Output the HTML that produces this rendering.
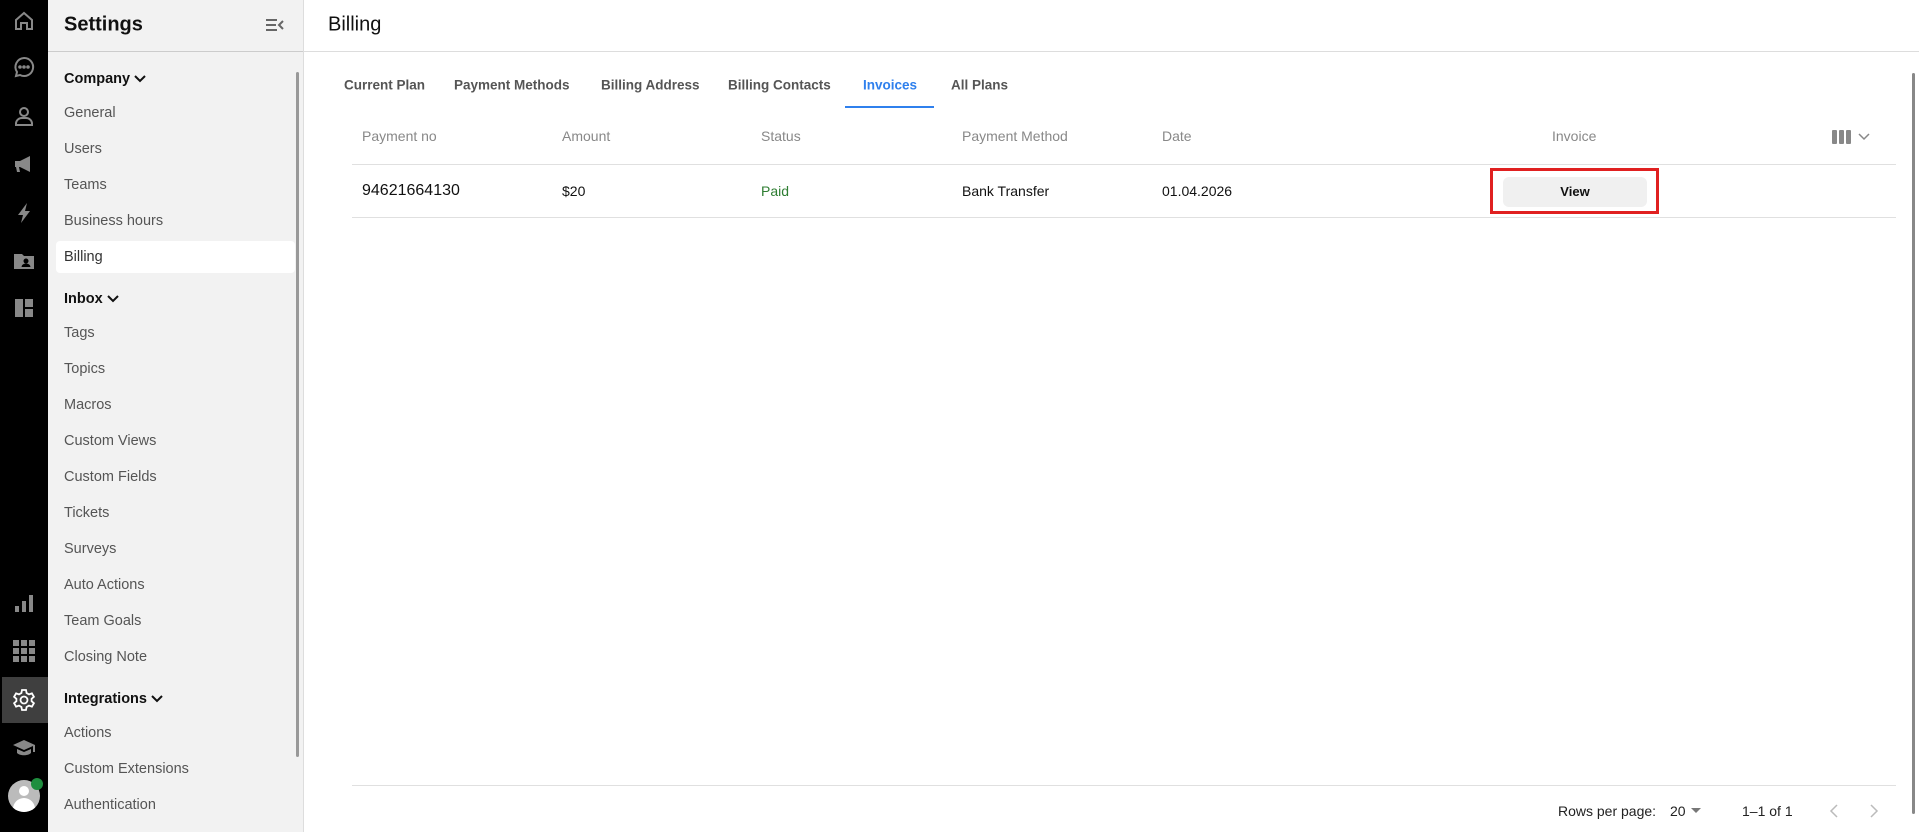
<!DOCTYPE html>
<html><head><meta charset="utf-8"><style>
*{box-sizing:border-box;margin:0;padding:0}
body{width:1919px;height:832px;overflow:hidden;font-family:"Liberation Sans",sans-serif;background:#fff;position:relative}
.abs{position:absolute}
#rail{left:0;top:0;width:48px;height:832px;background:#000}
#rail svg{position:absolute;left:12px;width:24px;height:24px}
#side{left:48px;top:0;width:256px;height:832px;background:#f2f2f2;border-right:1px solid #ddd}
.mi{position:absolute;left:16px;font-size:14.5px;color:#555;transform:translateY(-50%)}
.mh{position:absolute;left:16px;font-size:14.5px;color:#111;font-weight:bold;transform:translateY(-50%)}
.mh svg{display:inline-block;vertical-align:middle;margin-left:4px}
.tab{position:absolute;top:85px;transform:translateY(-50%);font-size:13.5px;font-weight:bold;color:#555}
.th{position:absolute;top:136px;transform:translateY(-50%);font-size:14px;color:#888}
.td{position:absolute;top:191px;transform:translateY(-50%);font-size:14px;color:#111}
</style></head><body>
<div id="rail" class="abs">
<svg style="top:9px" viewBox="0 0 24 24" fill="none" stroke="#888" stroke-width="2"><path d="M4 11l8-7 8 7v9h-5v-6H9v6H4z"/></svg>
<svg style="top:55px" viewBox="0 0 24 24" fill="none" stroke="#888" stroke-width="2"><path d="M12 3a9 9 0 1 1-4 17l-4 1 1-4A9 9 0 0 1 12 3z"/><circle cx="8" cy="12" r=".8" fill="#888"/><circle cx="12" cy="12" r=".8" fill="#888"/><circle cx="16" cy="12" r=".8" fill="#888"/></svg>
<svg style="top:104px" viewBox="0 0 24 24" fill="none" stroke="#888" stroke-width="2"><circle cx="12" cy="8" r="4"/><path d="M4 21v-2a6 6 0 0 1 6-5h4a6 6 0 0 1 6 5v2z"/></svg>
<svg style="top:152px" viewBox="0 0 24 24" fill="#888"><path d="M3 9h5l10-5v16L8 15H7l1 5H5l-1-5H3z"/></svg>
<svg style="top:201px" viewBox="0 0 24 24" fill="#888"><path d="M15 2L6 14h5l-2 8 9-12h-5z"/></svg>
<svg style="top:249px" viewBox="0 0 24 24" fill="#888"><path d="M2 5h8l2 2h10v13H2z"/><circle cx="14" cy="12" r="2.5" fill="#000"/><path d="M9.5 18a4.5 3.5 0 0 1 9 0z" fill="#000"/></svg>
<svg style="top:296px" viewBox="0 0 24 24" fill="#888"><path d="M3 3h8v18H3zM13 3h8v8h-8zM13 13h8v8h-8z"/></svg>
<svg style="top:591px" viewBox="0 0 24 24" fill="#888"><rect x="3" y="15" width="4" height="6"/><rect x="10" y="10" width="4" height="11"/><rect x="17" y="4" width="4" height="17"/></svg>
<svg style="top:639px" viewBox="0 0 24 24" fill="#888"><rect x="1" y="1" width="6" height="6"/><rect x="9" y="1" width="6" height="6"/><rect x="17" y="1" width="6" height="6"/><rect x="1" y="9" width="6" height="6"/><rect x="9" y="9" width="6" height="6"/><rect x="17" y="9" width="6" height="6"/><rect x="1" y="17" width="6" height="6"/><rect x="9" y="17" width="6" height="6"/><rect x="17" y="17" width="6" height="6"/></svg>
<div class="abs" style="left:2px;top:677px;width:46px;height:46px;background:#3f3f3f"></div>
<svg style="top:688px" viewBox="0 0 24 24" fill="none" stroke="#fff" stroke-width="1.8"><path d="M10 2h4l.6 3 2.4 1.4 2.9-1 2 3.4-2.3 2v2.4l2.3 2-2 3.4-2.9-1L14.6 19 14 22h-4l-.6-3L7 17.6l-2.9 1-2-3.4 2.3-2v-2.4l-2.3-2 2-3.4 2.9 1L9.4 5z"/><circle cx="12" cy="12" r="3.5"/></svg>
<svg style="top:736px" viewBox="0 0 24 24" fill="#888"><path d="M12 4L1 9l11 5 9-4v6h2V9z"/><path d="M5 13v4c3 3 11 3 14 0v-4l-7 3z"/></svg>
<div class="abs" style="left:8px;top:780px;width:32px;height:32px;border-radius:50%;background:#bbb;overflow:hidden"><div class="abs" style="left:11px;top:6px;width:10px;height:10px;border-radius:50%;background:#fff"></div><div class="abs" style="left:5px;top:18px;width:22px;height:14px;border-radius:11px 11px 0 0;background:#fff"></div></div>
<div class="abs" style="left:31px;top:778px;width:12px;height:12px;border-radius:50%;background:#1e8e3e"></div>
</div>
<div id="side" class="abs">
<div class="abs" style="left:16px;top:25px;transform:translateY(-50%);font-size:20px;font-weight:bold;color:#111">Settings</div>
<svg class="abs" style="left:217px;top:17px" width="20" height="16" viewBox="0 0 20 16" fill="none" stroke="#666" stroke-width="2"><path d="M1 3h11M1 8h10M1 13h11M18 4l-4 4 4 4"/></svg>
<div class="abs" style="left:0;top:51px;width:255px;height:1px;background:#ccc"></div>
<div class="abs" style="left:8px;top:241px;width:239px;height:32px;background:#fff;border-radius:4px"></div>
<div class="mh" style="top:79px">Company<svg width="12" height="8" viewBox="0 0 12 8" fill="none" stroke="#111" stroke-width="2"><path d="M1 1l5 5 5-5"/></svg></div>
<div class="mi" style="top:113px">General</div>
<div class="mi" style="top:149px">Users</div>
<div class="mi" style="top:185px">Teams</div>
<div class="mi" style="top:221px">Business hours</div>
<div class="mi" style="top:257px;color:#333">Billing</div>
<div class="mh" style="top:299px">Inbox<svg width="12" height="8" viewBox="0 0 12 8" fill="none" stroke="#111" stroke-width="2"><path d="M1 1l5 5 5-5"/></svg></div>
<div class="mi" style="top:333px">Tags</div>
<div class="mi" style="top:369px">Topics</div>
<div class="mi" style="top:405px">Macros</div>
<div class="mi" style="top:441px">Custom Views</div>
<div class="mi" style="top:477px">Custom Fields</div>
<div class="mi" style="top:513px">Tickets</div>
<div class="mi" style="top:549px">Surveys</div>
<div class="mi" style="top:585px">Auto Actions</div>
<div class="mi" style="top:621px">Team Goals</div>
<div class="mi" style="top:657px">Closing Note</div>
<div class="mh" style="top:699px">Integrations<svg width="12" height="8" viewBox="0 0 12 8" fill="none" stroke="#111" stroke-width="2"><path d="M1 1l5 5 5-5"/></svg></div>
<div class="mi" style="top:733px">Actions</div>
<div class="mi" style="top:769px">Custom Extensions</div>
<div class="mi" style="top:805px">Authentication</div>
<div class="abs" style="left:248px;top:72px;width:3px;height:685px;background:#999;border-radius:2px"></div>
</div>
<div class="abs" style="left:328px;top:25px;transform:translateY(-50%);font-size:20px;color:#111">Billing</div>
<div class="abs" style="left:304px;top:51px;width:1615px;height:1px;background:#ddd"></div>
<div class="tab" style="left:344px">Current Plan</div>
<div class="tab" style="left:454px">Payment Methods</div>
<div class="tab" style="left:601px">Billing Address</div>
<div class="tab" style="left:728px">Billing Contacts</div>
<div class="tab" style="left:863px;color:#2f80ed">Invoices</div>
<div class="tab" style="left:951px">All Plans</div>
<div class="abs" style="left:845px;top:106px;width:89px;height:2px;background:#2f80ed"></div>
<div class="th" style="left:362px">Payment no</div>
<div class="th" style="left:562px">Amount</div>
<div class="th" style="left:761px">Status</div>
<div class="th" style="left:962px">Payment Method</div>
<div class="th" style="left:1162px">Date</div>
<div class="th" style="left:1552px">Invoice</div>
<svg class="abs" style="left:1832px;top:129px" width="40" height="16" viewBox="0 0 40 16"><rect x="0" y="1" width="5" height="14" rx="1" fill="#888"/><rect x="7" y="1" width="5" height="14" rx="1" fill="#888"/><rect x="14" y="1" width="5" height="14" rx="1" fill="#888"/><path d="M27 5l5 5 5-5" fill="none" stroke="#888" stroke-width="1.5"/></svg>
<div class="abs" style="left:352px;top:164px;width:1544px;height:1px;background:#e0e0e0"></div>
<div class="td" style="left:362px;font-size:16px">94621664130</div>
<div class="td" style="left:562px">$20</div>
<div class="td" style="left:761px;color:#2e7d32">Paid</div>
<div class="td" style="left:962px">Bank Transfer</div>
<div class="td" style="left:1162px">01.04.2026</div>
<div class="abs" style="left:1490px;top:168px;width:169px;height:46px;border:3px solid #e02020"></div>
<div class="abs" style="left:1503px;top:177px;width:144px;height:30px;background:#f0f0f0;border-radius:6px;font-size:13px;font-weight:bold;color:#111;text-align:center;line-height:30px">View</div>
<div class="abs" style="left:352px;top:217px;width:1544px;height:1px;background:#e0e0e0"></div>
<div class="abs" style="left:352px;top:785px;width:1544px;height:1px;background:#e0e0e0"></div>
<div class="abs" style="left:1558px;top:811px;transform:translateY(-50%);font-size:14px;color:#222">Rows per page:</div>
<div class="abs" style="left:1670px;top:811px;transform:translateY(-50%);font-size:14px;color:#222">20</div>
<svg class="abs" style="left:1691px;top:808px" width="10" height="6"><path d="M0 0h10L5 5z" fill="#777"/></svg>
<div class="abs" style="left:1742px;top:811px;transform:translateY(-50%);font-size:14px;color:#222">1–1 of 1</div>
<svg class="abs" style="left:1829px;top:804px" width="10" height="14" fill="none" stroke="#bbb" stroke-width="1.5"><path d="M8 1L2 7l6 6"/></svg>
<svg class="abs" style="left:1869px;top:804px" width="10" height="14" fill="none" stroke="#bbb" stroke-width="1.5"><path d="M2 1l6 6-6 6"/></svg>
<div class="abs" style="left:1912px;top:73px;width:3px;height:741px;background:#888;border-radius:2px"></div>
</body></html>
